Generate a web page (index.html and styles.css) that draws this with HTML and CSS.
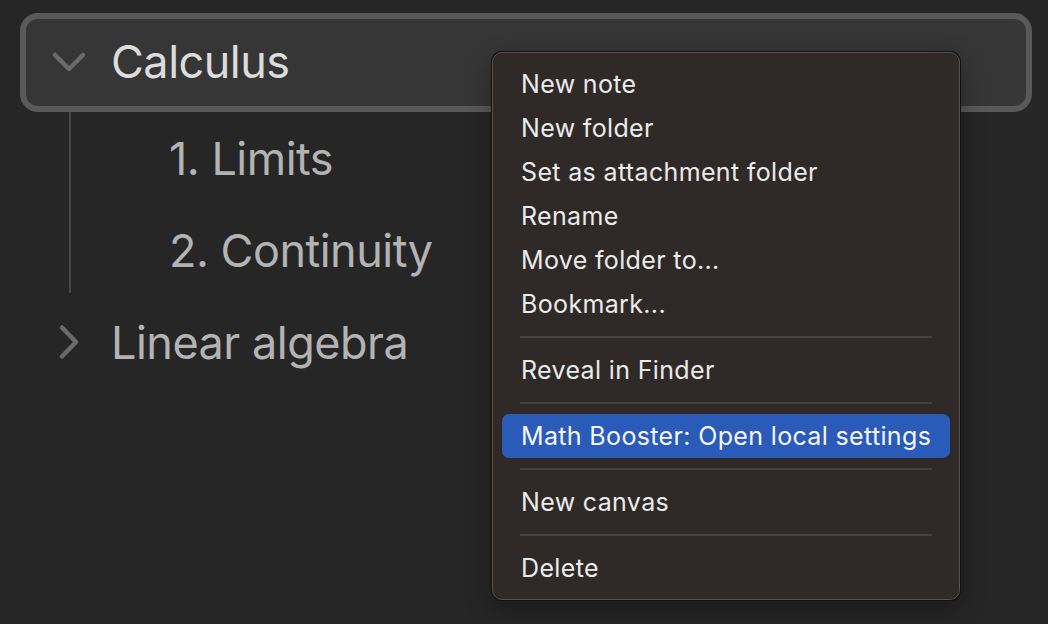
FILE: index.html
```html
<!DOCTYPE html>
<html>
<head>
<meta charset="utf-8">
<link rel="stylesheet" href="styles.css">
</head>
<body>
<div class="tree">
  <div class="folder open selected">
    <svg class="chev" width="36" height="36" viewBox="0 0 36 36"><path d="M4 11 L18 25 L32 11" fill="none" stroke="#6a6a6a" stroke-width="4.5" stroke-linecap="round" stroke-linejoin="round"/></svg>
    <span class="folder-title">Calculus</span>
  </div>
  <div class="children">
    <div class="file">1. Limits</div>
    <div class="file">2. Continuity</div>
  </div>
  <div class="folder">
    <svg class="chev" width="36" height="36" viewBox="0 0 36 36"><path d="M11 3.5 L25 18 L11 32.5" fill="none" stroke="#6a6a6a" stroke-width="4.5" stroke-linecap="round" stroke-linejoin="round"/></svg>
    <span class="folder-title dim">Linear algebra</span>
  </div>
</div>

<div class="menu">
  <div class="item">New note</div>
  <div class="item">New folder</div>
  <div class="item">Set as attachment folder</div>
  <div class="item">Rename</div>
  <div class="item">Move folder to...</div>
  <div class="item">Bookmark...</div>
  <div class="sep"></div>
  <div class="item">Reveal in Finder</div>
  <div class="sep"></div>
  <div class="item active">Math Booster: Open local settings</div>
  <div class="sep"></div>
  <div class="item">New canvas</div>
  <div class="sep"></div>
  <div class="item">Delete</div>
</div>
</body>
</html>
```

FILE: styles.css
```css
html, body {
  margin: 0;
  padding: 0;
  background: #262626;
  width: 1048px;
  height: 624px;
  overflow: hidden;
  font-family: Inter, "Noto Sans", "Liberation Sans", sans-serif;
}

.tree {
  padding: 13px 16px 0 20px;
}

.folder {
  display: flex;
  align-items: center;
  height: 92px;
  box-sizing: border-box;
  padding-left: 31px;
}

.folder.selected {
  height: 99px;
  border: 6px solid #595959;
  border-radius: 18px;
  background: #363636;
  padding-left: 25px;
  padding-bottom: 2px;
}

.chev {
  flex: none;
  width: 36px;
  height: 36px;
}

.folder-title {
  margin-left: 24px;
  font-size: 45px;
  color: #dcdcdc;
  letter-spacing: -0.5px;
}

.folder-title.dim {
  color: #b3b3b3;
}

.children {
  margin-left: 49px;
  border-left: 2px solid #474747;
  height: 181px;
  margin-bottom: 3px;
}

.file {
  height: 92px;
  display: flex;
  align-items: center;
  padding-left: 98px;
  font-size: 45px;
  color: #b3b3b3;
  letter-spacing: -0.5px;
}

.menu {
  position: absolute;
  left: 492px;
  top: 52px;
  width: 468px;
  box-sizing: border-box;
  padding: 9px;
  background: #2f2a28;
  border: 1px solid #58534f;
  border-radius: 10px;
  box-shadow: 0 0 0 1px #121212, 0 8px 24px rgba(0,0,0,0.35);
}

.item {
  height: 44px;
  display: flex;
  align-items: center;
  padding-left: 19px;
  font-size: 25px;
  letter-spacing: 0.35px;
  color: #ebebeb;
  border-radius: 7px;
}

.item.active {
  background: #2a5bb8;
  color: #f4f6fb;
}

.sep {
  height: 2px;
  margin: 10px 18px;
  background: #48423f;
}
```
